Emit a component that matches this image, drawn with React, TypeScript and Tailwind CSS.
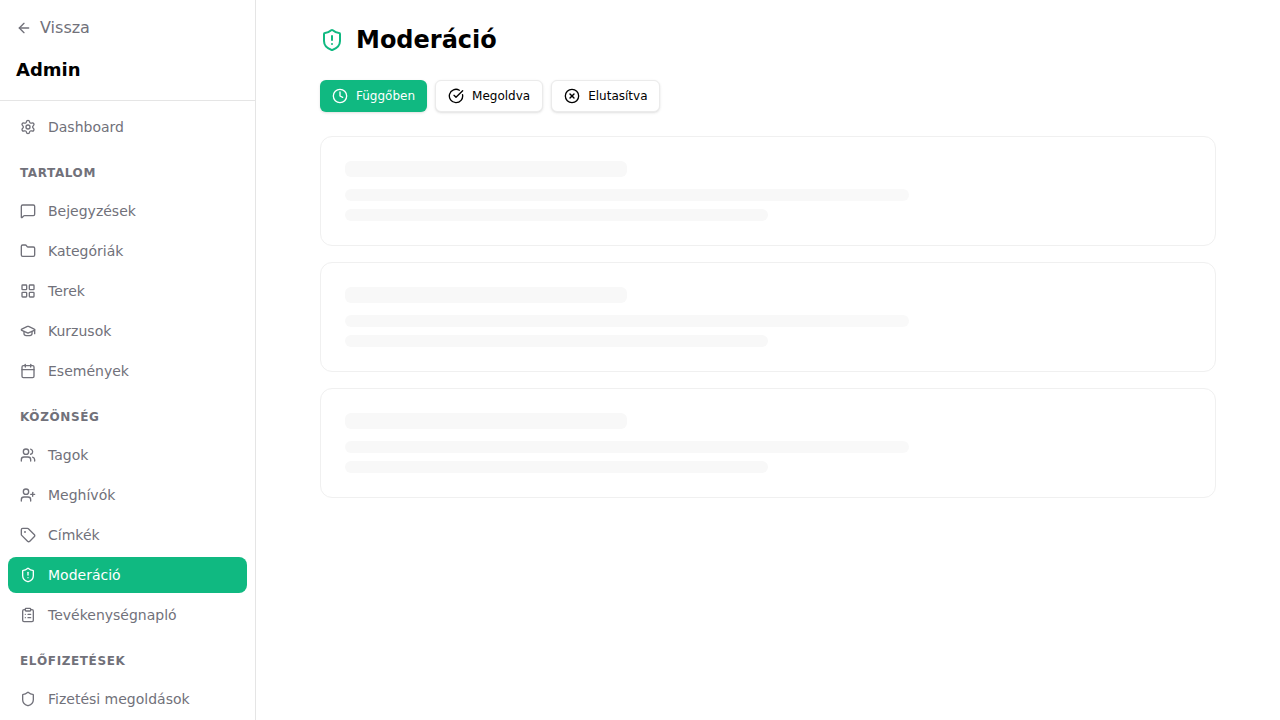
import React from 'react'
import {
  ArrowLeft,
  Calendar,
  CircleCheckBig,
  CircleX,
  ClipboardList,
  Clock,
  Folder,
  GraduationCap,
  LayoutGrid,
  MessageSquare,
  Settings,
  Shield,
  ShieldAlert,
  Tag,
  UserPlus,
  Users,
  type LucideIcon
} from 'lucide-react'

interface NavEntry {
  label: string
  icon: LucideIcon
  active?: boolean
}

interface NavSection {
  title?: string
  items: NavEntry[]
}

const sections: NavSection[] = [
  { items: [{ label: 'Dashboard', icon: Settings }] },
  {
    title: 'Tartalom',
    items: [
      { label: 'Bejegyzések', icon: MessageSquare },
      { label: 'Kategóriák', icon: Folder },
      { label: 'Terek', icon: LayoutGrid },
      { label: 'Kurzusok', icon: GraduationCap },
      { label: 'Események', icon: Calendar }
    ]
  },
  {
    title: 'Közönség',
    items: [
      { label: 'Tagok', icon: Users },
      { label: 'Meghívók', icon: UserPlus },
      { label: 'Címkék', icon: Tag },
      { label: 'Moderáció', icon: ShieldAlert, active: true },
      { label: 'Tevékenységnapló', icon: ClipboardList }
    ]
  },
  {
    title: 'Előfizetések',
    items: [{ label: 'Fizetési megoldások', icon: Shield }]
  }
]

const NavItem: React.FC<NavEntry> = ({ label, icon: Icon, active }) => (
  <a
    className={
      active
        ? 'flex h-9 items-center gap-3 rounded-lg bg-[#10b981] px-3 text-sm text-white'
        : 'flex h-9 items-center gap-3 rounded-lg px-3 text-sm text-[#71717a]'
    }
  >
    <Icon className="h-4 w-4 shrink-0" />
    <span>{label}</span>
  </a>
)

const Sidebar: React.FC = () => (
  <aside className="flex h-full w-64 shrink-0 flex-col overflow-hidden border-r border-[#e5e5e5] bg-white">
    <div className="h-[101px] shrink-0 border-b border-[#e5e5e5] px-4 pt-[16px]">
      <div className="flex h-6 items-center gap-2 text-base text-[#71717a]">
        <ArrowLeft className="h-4 w-4" />
        <span>Vissza</span>
      </div>
      <h1 className="mt-[16px] text-lg font-bold leading-7 text-black">Admin</h1>
    </div>
    <nav className="flex flex-col px-2 pt-2">
      {sections.map((section, i) => (
        <div key={i} className="flex flex-col gap-1">
          {section.title && (
            <div className="px-3 pt-[20px] pb-[8px] text-xs font-bold uppercase leading-4 tracking-wider text-[#71717a]">
              {section.title}
            </div>
          )}
          {section.items.map((item) => (
            <NavItem key={item.label} {...item} />
          ))}
        </div>
      ))}
    </nav>
  </aside>
)

const tabs = [
  { label: 'Függőben', icon: Clock, active: true },
  { label: 'Megoldva', icon: CircleCheckBig },
  { label: 'Elutasítva', icon: CircleX }
]

const SkeletonCard: React.FC = () => (
  <div className="flex flex-col rounded-xl border border-[#f0f0f0] bg-white p-6">
    <div className="h-4 w-1/3 rounded-md bg-[#f8f8f8]" />
    <div className="mt-3 h-3 w-2/3 rounded-md bg-[linear-gradient(90deg,#f8f8f8_86%,#f9f9f9_86%)]" />
    <div className="mt-2 h-3 w-1/2 rounded-md bg-[#f8f8f8]" />
  </div>
)

export default function App() {
  return (
    <div className="flex h-screen overflow-hidden bg-white font-['DejaVu_Sans',sans-serif]">
      <Sidebar />
      <main className="min-w-0 flex-1 px-16 pt-6">
        <div className="flex h-8 items-center gap-3">
          <ShieldAlert className="h-6 w-6 text-[#10b981]" />
          <h2 className="text-2xl font-bold text-black">Moderáció</h2>
        </div>
        <div className="mt-6 flex gap-2">
          {tabs.map(({ label, icon: Icon, active }) => (
            <button
              key={label}
              className={
                active
                  ? 'flex h-8 items-center gap-2 rounded-md bg-[#10b981] px-3 text-xs text-white shadow-sm'
                  : 'flex h-8 items-center gap-2 rounded-md border border-[#ebebeb] bg-white px-3 text-xs text-black shadow-sm'
              }
            >
              <Icon className="h-4 w-4" />
              {label}
            </button>
          ))}
        </div>
        <div className="mt-6 flex flex-col gap-4">
          <SkeletonCard />
          <SkeletonCard />
          <SkeletonCard />
        </div>
      </main>
    </div>
  )
}
